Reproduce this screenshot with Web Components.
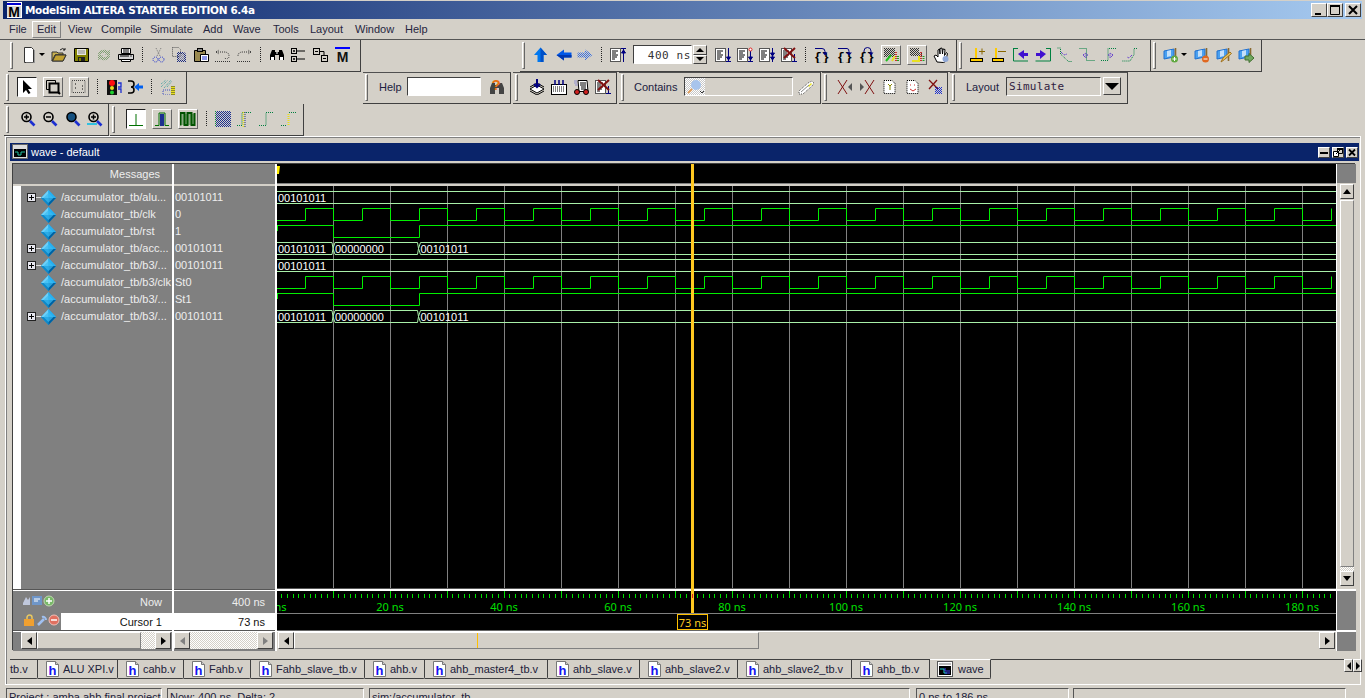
<!DOCTYPE html>
<html>
<head>
<meta charset="utf-8">
<title>ModelSim</title>
<style>
  html, body { margin: 0; padding: 0; background: #d4d0c8; overflow: hidden; }
  body { width: 1365px; height: 698px; font: 11px "Liberation Sans", sans-serif; color: #1a1a2a; }
  ms-app { height: 698px; }
</style>
</head>
<body>
<ms-app>
  <ms-titlebar>ModelSim ALTERA STARTER EDITION 6.4a</ms-titlebar>
  <ms-menubar></ms-menubar>

  <ms-toolbars>
    <ms-toolrow style="border-top:1px solid #555;height:33px;--pb:2px">
      <ms-toolgroup style="margin-left:8px;width:353px" pad="13">
        <ms-icon name="new" style="margin-right:2px"></ms-icon><ms-icon name="drop" w="6" style="margin-right:6px"></ms-icon>
        <ms-icon name="open" style="margin-right:7px"></ms-icon><ms-icon name="save" style="margin-right:6px"></ms-icon><ms-icon name="reload" style="margin-right:6px"></ms-icon><ms-icon name="print"></ms-icon>
        <ms-sep></ms-sep>
        <ms-icon name="cut" style="margin-right:4px"></ms-icon><ms-icon name="copy" style="margin-right:6px"></ms-icon><ms-icon name="paste" style="margin-right:6px"></ms-icon><ms-icon name="undo" style="margin-right:5px"></ms-icon><ms-icon name="redo"></ms-icon>
        <ms-sep></ms-sep>
        <ms-icon name="find" style="margin-right:6px"></ms-icon><ms-icon name="tree" style="margin-right:6px"></ms-icon><ms-icon name="tree2" style="margin-right:6px"></ms-icon><ms-icon name="logo"></ms-icon>
      </ms-toolgroup>
      <ms-toolgroup style="margin-left:159px;width:437px" pad="13">
        <ms-icon name="up" style="margin-right:7px"></ms-icon><ms-icon name="left" style="margin-right:5px"></ms-icon><ms-icon name="right"></ms-icon>
        <ms-sep></ms-sep>
        <ms-icon name="docup" style="margin-right:7px"></ms-icon>
        <ms-run-input>400 ns</ms-run-input>
        <ms-icon name="docdown" style="margin-left:8px;margin-right:6px"></ms-icon><ms-icon name="docdot" style="margin-right:6px"></ms-icon><ms-icon name="docdown2" style="margin-right:6px"></ms-icon><ms-icon name="docx"></ms-icon>
        <ms-sep></ms-sep>
        <ms-icon name="step1" w="17" style="margin-right:6px"></ms-icon><ms-icon name="step2" w="17" style="margin-right:5px"></ms-icon><ms-icon name="step3" w="17" style="margin-right:5px"></ms-icon>
        <ms-btn><ms-icon name="perf1"></ms-icon></ms-btn><ms-btn style="margin-left:6px"><ms-icon name="perf2"></ms-icon></ms-btn><ms-icon name="hand" style="margin-left:6px"></ms-icon>
      </ms-toolgroup>
      <ms-toolgroup style="width:194px" pad="12">
        <ms-icon name="curadd" style="margin-right:6px"></ms-icon><ms-icon name="curdel" style="margin-right:6px"></ms-icon><ms-icon name="brackl" style="margin-right:6px"></ms-icon><ms-icon name="brackr" style="margin-right:6px"></ms-icon><ms-icon name="dot1" style="margin-right:6px"></ms-icon><ms-icon name="dot2" style="margin-right:6px"></ms-icon><ms-icon name="dot3" style="margin-right:5px"></ms-icon><ms-icon name="dot4"></ms-icon>
      </ms-toolgroup>
      <ms-toolgroup style="width:111px" pad="12">
        <ms-icon name="flagadd" w="16"></ms-icon><ms-icon name="drop" w="6" style="margin:0 7px 0 2px"></ms-icon><ms-icon name="flagdel" style="margin-right:6px"></ms-icon><ms-icon name="flagedit" style="margin-right:6px"></ms-icon><ms-icon name="flaggo"></ms-icon>
      </ms-toolgroup>
    </ms-toolrow>

    <ms-toolrow style="--pb:3px;--hm:1px">
      <ms-toolgroup style="margin-left:4px;width:183px;--pb:2px;--hm:2px" pad="13">
        <ms-btn pressed><ms-icon name="arrow"></ms-icon></ms-btn><ms-btn style="margin-left:6px"><ms-icon name="zoombox"></ms-icon></ms-btn><ms-btn style="margin-left:6px"><ms-icon name="dotbox"></ms-icon></ms-btn>
        <ms-sep></ms-sep>
        <ms-icon name="stop" style="margin-right:5px"></ms-icon><ms-icon name="merge"></ms-icon>
        <ms-sep></ms-sep>
        <ms-icon name="hatch"></ms-icon>
      </ms-toolgroup>
      <ms-toolgroup top style="margin-left:176px;width:148px" pad="16">
        <span style="margin-right:5px">Help</span><ms-field width="74"></ms-field><ms-icon name="helpfind" style="margin-left:8px"></ms-icon>
      </ms-toolgroup>
      <ms-toolgroup top style="margin-left:2px;width:104px" pad="16">
        <ms-icon name="load" style="margin-right:6px"></ms-icon><ms-icon name="grid" style="margin-right:6px"></ms-icon><ms-icon name="cart" style="margin-right:6px"></ms-icon><ms-icon name="docx"></ms-icon>
      </ms-toolgroup>
      <ms-toolgroup top style="margin-left:2px;width:202px" pad="15">
        <span style="margin-right:7px">Contains</span><ms-contains></ms-contains><ms-icon name="pencil" style="margin-left:5px"></ms-icon>
      </ms-toolgroup>
      <ms-toolgroup top style="margin-left:1px;width:126px" pad="15">
        <ms-icon name="xl" style="margin-right:6px"></ms-icon><ms-icon name="xr" style="margin-right:7px"></ms-icon><ms-icon name="pg1" style="margin-right:7px"></ms-icon><ms-icon name="pg2" style="margin-right:6px"></ms-icon><ms-icon name="xdither"></ms-icon>
      </ms-toolgroup>
      <ms-toolgroup top style="margin-left:2px;width:178px" pad="16">
        <span style="margin-right:7px">Layout</span><ms-select>Simulate</ms-select>
      </ms-toolgroup>
    </ms-toolrow>

    <ms-toolrow style="--pb:1px">
      <ms-toolgroup style="margin-left:4px;width:105px" pad="16">
        <ms-icon name="zoomin" style="margin-right:6px"></ms-icon><ms-icon name="zoomout" style="margin-right:7px"></ms-icon><ms-icon name="zoomfull" style="margin-right:6px"></ms-icon><ms-icon name="zoomcur"></ms-icon>
      </ms-toolgroup>
      <ms-toolgroup style="margin-left:1px;width:194px" pad="16">
        <ms-btn pressed><ms-icon name="w1"></ms-icon></ms-btn><ms-btn style="margin-left:6px"><ms-icon name="w2"></ms-icon></ms-btn><ms-btn style="margin-left:6px"><ms-icon name="w3"></ms-icon></ms-btn>
        <ms-sep></ms-sep>
        <ms-icon name="checker" style="margin-right:6px"></ms-icon><ms-icon name="edge1" style="margin-right:6px"></ms-icon><ms-icon name="edge2" style="margin-right:6px"></ms-icon><ms-icon name="edge3"></ms-icon>
      </ms-toolgroup>
    </ms-toolrow>
  </ms-toolbars>

  <ms-frame>
    <ms-wave-window title="wave - default">
      <ms-signal expand name="/accumulator_tb/alu..." value="00101011"></ms-signal>
      <ms-signal name="/accumulator_tb/clk" value="0"></ms-signal>
      <ms-signal name="/accumulator_tb/rst" value="1"></ms-signal>
      <ms-signal expand name="/accumulator_tb/acc..." value="00101011"></ms-signal>
      <ms-signal expand name="/accumulator_tb/b3/..." value="00101011"></ms-signal>
      <ms-signal name="/accumulator_tb/b3/clk" value="St0"></ms-signal>
      <ms-signal name="/accumulator_tb/b3/..." value="St1"></ms-signal>
      <ms-signal expand name="/accumulator_tb/b3/..." value="00101011"></ms-signal>
    </ms-wave-window>
    <ms-tabs>
      <ms-tab w="28" plain>tb.v</ms-tab>
      <ms-tab w="80">ALU XPI.v</ms-tab>
      <ms-tab w="66">cahb.v</ms-tab>
      <ms-tab w="67">Fahb.v</ms-tab>
      <ms-tab w="114">Fahb_slave_tb.v</ms-tab>
      <ms-tab w="60">ahb.v</ms-tab>
      <ms-tab w="123">ahb_master4_tb.v</ms-tab>
      <ms-tab w="92">ahb_slave.v</ms-tab>
      <ms-tab w="98">ahb_slave2.v</ms-tab>
      <ms-tab w="114">ahb_slave2_tb.v</ms-tab>
      <ms-tab w="78">ahb_tb.v</ms-tab>
      <ms-tab w="61" active>wave</ms-tab>
    </ms-tabs>
  </ms-frame>

  <ms-statusbar>
    <ms-status w="156">Project : amba ahb final project</ms-status>
    <ms-status w="197" style="margin-left:5px">Now: 400 ns&nbsp; Delta: 2</ms-status>
    <ms-status w="541" style="margin-left:5px">sim:/accumulator_tb</ms-status>
    <ms-status w="153" style="margin-left:6px">0 ps to 186 ns</ms-status>
    <ms-status w="273" style="margin-left:4px"></ms-status>
  </ms-statusbar>
</ms-app>

<script>
const UI_FONT = '"Liberation Sans", Arial, sans-serif';
const MONO_FONT = '"DejaVu Sans Mono", "Liberation Mono", monospace';

// dither fill, every icon has its own shadow root so the id can repeat
const dith = (c, id = 'd') => `<pattern id="${id}" width="2" height="2" patternUnits="userSpaceOnUse"><rect width="1" height="1" fill="${c}"/><rect x="1" y="1" width="1" height="1" fill="${c}"/></pattern>`;
const dots = 'stroke-dasharray="1 1"';
const NAVY = '#000080';

const docLines = `<rect x=".5" y="1.5" width="10" height="13" fill="#fff" stroke="#555"/><path d="M2 4h6M2 6h4M2 8h6M2 10h5M2 12h3" stroke="#000"/>`;
const lens = (extra = '', fill = 'none') => `<circle cx="6.5" cy="6" r="4.5" fill="${fill}" stroke="#000" stroke-width="1.6"/>${extra}<path d="M10 10l4.5 4.5" stroke="#1c2fd0" stroke-width="2.6"/>`;
const flag = (extra) => `<path d="M1 4l10-2v8l-10 2z" fill="#4aa0f0" stroke="#2070d0"/><path d="M4 4l4-1v6l-4 1z" fill="#c4e0fa"/><path d="M12.5 1v13" stroke="#8a6a30" stroke-width="1.6"/>${extra}`;
const stepIcon = (arc) => `<text x="0" y="14" font-family="Liberation Mono" font-weight="700" font-size="13" fill="#000">{}</text>${arc}`;

const ICONS = {
  new: `<path d="M3.500 .5h7l2 2v13h-9z" fill="#fff" stroke="#333"/><path d="M13.500 3v13H5" stroke="#999" fill="none"/>`,
  drop: `<path d="M0 6h6L3 9z" fill="#000"/>`,
  open: `<path d="M1 14V5h5l1 1h5v2H4l-3 6h11l3-6H4" fill="#c8b050" stroke="#333"/><path d="M1.500 14l3-6h10.500l-3 6z" fill="#c0a030" stroke="#333"/><path d="M9 3q3-3 5 0M14 1v2h-2" fill="none" stroke="#222"/>`,
  save: `<path d="M.5 1.500h14v13H.5z" fill="#808000" stroke="#000"/><rect x="3" y="2" width="9" height="6" fill="#e8e8e0"/><path d="M4 4h7M4 6h7" stroke="#888"/><rect x="4" y="10" width="7" height="4" fill="#222"/><rect x="5" y="11" width="2" height="3" fill="#808000"/>`,
  reload: `${dith('#7f9f70')}<path d="M2 7a6 5 0 0 1 10-3l2-1v5h-5l1.500-1.500A4 3 0 0 0 4 8zM14 9a6 5 0 0 1-10 3l-2 1V8h5L5.500 9.500A4 3 0 0 0 12 8z" fill="url(#d)"/>`,
  print: `<path d="M3.500 1.500h9v5h-9z" fill="#fff" stroke="#000"/><path d="M.5 7.500h15v5h-15z" fill="#d8d8d8" stroke="#000"/><path d="M3.500 12.500h9v2h-9z" fill="#fff" stroke="#000"/><path d="M5 3h6M5 5h6M2 9h9" stroke="#000"/><path d="M12 9h2" stroke="#444"/>`,
  cut: `<path d="M5 1l4 8M10 1L6 9" stroke="#777" ${dots} fill="none"/><circle cx="4.500" cy="12.500" r="2.500" fill="none" stroke="#1c2fd0" ${dots}/><circle cx="10.500" cy="12.500" r="2.500" fill="none" stroke="#1c2fd0" ${dots}/>`,
  copy: `${dith('#1a2a80')}<path d="M1.500 .5h6l2 2v7h-8z" fill="none" stroke="#555" ${dots}/><path d="M6 5h7l2 2v8H6z" fill="url(#d)"/><path d="M8 8h5M8 10h5M8 12h5" stroke="#d4d0c8"/>`,
  paste: `<path d="M1.500 3.500h11v11h-11z" fill="#9a8a50" stroke="#000"/><rect x="4.500" y="1.500" width="5" height="3" fill="#888" stroke="#000"/><path d="M7.500 7.500h8v7h-8z" fill="#fff" stroke="#000"/><path d="M9 10h5M9 12h5" stroke="#1c2fd0"/>`,
  undo: `<path d="M1 5l3 2M1 5l3-2M1 5h8q5 0 5 4t-5 2" fill="none" stroke="#333" ${dots}/><path d="M0 14.500h15" stroke="#333" ${dots}/>`,
  redo: `<path d="M15 5l-3 2M15 5l-3-2M15 5H7q-5 0-5 4" fill="none" stroke="#333" ${dots}/><path d="M1 14.500h14" stroke="#333" ${dots}/>`,
  find: `<path d="M1 13V8l2-5h3v2h4V3h3l2 5v5h-5V8H6v5z" fill="#000"/><rect x="2" y="10" width="3" height="3" fill="#fff"/><rect x="11" y="10" width="3" height="3" fill="#fff"/><rect x="7" y="5" width="2" height="2" fill="#888"/>`,
  tree: `<rect x=".5" y="1.500" width="5" height="5" fill="none" stroke="#000"/><rect x=".5" y="9.500" width="5" height="5" fill="none" stroke="#000"/><path d="M2 4h2M3 3v2M2 12h2M3 11v2M6 4h8M6 12h8" stroke="#000"/>`,
  tree2: `<rect x=".5" y="1.500" width="6" height="6" fill="none" stroke="#000"/><rect x="8.500" y="8.500" width="6" height="6" fill="none" stroke="#000"/><path d="M2 4.500h3M10 11.500h3M7 4.500h4v4" stroke="#000" fill="none"/>`,
  logo: `<rect x="0" y="0" width="15" height="2" fill="#0000ff"/><text x="7.500" y="15" text-anchor="middle" font-family="Liberation Sans" font-weight="700" font-size="14" fill="#111">M</text>`,
  up: `<path d="M7.500 .5l6.500 7.500h-3.500v7h-6v-7H1z" fill="#0078f0"/><path d="M7.500 .5l6.500 7.500h-3.500v7h-3z" fill="#0050c8"/>`,
  left: `<path d="M.5 8L8 2.500V5.500h7.500v5H8v3z" fill="#0058e8"/><path d="M.5 8H15.500v2.500H8v3z" fill="#0038b0"/>`,
  right: `${dith('#3a70e0')}<path d="M15.500 8L8 2.500V5.500H.5v5H8v3z" fill="url(#d)"/>`,
  docup: `${docLines}<path d="M13.500 15V1M11 1.500h5M11.500 6h4l-2-3z" stroke="${NAVY}" fill="${NAVY}"/>`,
  docdown: `${docLines}<path d="M13.500 1v13M11 14.500h5M11.500 10h4l-2 3z" stroke="${NAVY}" fill="${NAVY}"/>`,
  docdot: `${docLines}<path d="M13.500 4v10M11 14.500h5M11.500 10h4l-2 3z" stroke="${NAVY}" fill="${NAVY}"/><circle cx="13.500" cy="2.500" r="1.500" fill="#fff" stroke="#e02020"/>`,
  docdown2: `${docLines}<path d="M13.500 1v14M11.500 6h4l-2 3zM11.500 10h4l-2 3z" stroke="${NAVY}" fill="${NAVY}"/>`,
  docx: `${docLines}<path d="M13.500 7v7M11 14.500h5" stroke="${NAVY}"/><path d="M3 1l11 10M14 1L3 11" stroke="#801010" stroke-width="2"/>`,
  step1: stepIcon(`<path d="M1 1.500h7a3 3 0 0 1 3 3V6" fill="none" stroke="${NAVY}"/><path d="M8.500 5.500h5l-2.500 3z" fill="${NAVY}"/>`),
  step2: stepIcon(`<path d="M1 1.500h9q2 0 2 3V6" fill="none" stroke="${NAVY}"/><path d="M9 5.500h6l-3 3z" fill="${NAVY}"/>`),
  step3: stepIcon(`<path d="M5 5V4a3 3 0 0 1 7 0v2" fill="none" stroke="${NAVY}"/><path d="M9.500 5.500h5l-2.500 3z" fill="${NAVY}"/>`),
  perf1: `${dith('#333')}<rect x="1" y="1" width="11" height="9" fill="url(#d)"/><path d="M3 14l5-6" stroke="#20c020" stroke-width="2"/><path d="M9 14l3-5" stroke="#e8e020" stroke-width="2"/><path d="M13 5v10" stroke="#d03030" stroke-width="2" ${dots}/><path d="M15 9v6" stroke="#20a020" stroke-width="2" ${dots}/>`,
  perf2: `${dith('#333')}<path d="M1 1h9v5h3v3H1z" fill="url(#d)"/><path d="M3 14h7V9" fill="none" stroke="#e8e020" stroke-width="2"/><path d="M12 5v10" stroke="#d03030" stroke-width="2" ${dots}/><path d="M14.500 9v6" stroke="#20a020" stroke-width="2" ${dots}/>`,
  hand: `<path d="M4 15L1 9l2-1 2 2V3l1.500-1L7 7V1.500L9 1l.5 6 .5-5 2 .5-.5 6 2-3 1 1-2 8-2 1z" fill="#fff" stroke="#000"/><circle cx="12.500" cy="12" r="3" fill="#8fa8d8"/>`,
  curadd: `<path d="M7 1v10" stroke="#ffcc00" stroke-width="2"/><rect x="1.500" y="11.500" width="12" height="3" fill="#ffcc00" stroke="#000"/><path d="M10 4.500h6M13 1.500v6" stroke="#886600"/>`,
  curdel: `<path d="M5 1v10" stroke="#ffcc00" stroke-width="2"/><rect x="1.500" y="11.500" width="11" height="3" fill="#ffcc00" stroke="#000"/><path d="M7 4.500h8" stroke="#886600"/>`,
  brackl: `<path d="M.5 1v13H15M.5 1.500H5" fill="none" stroke="#008040"/><path d="M5 7l6-4v3h4v3h-4v3z" fill="#4010d0"/>`,
  brackr: `<path d="M15.500 1v13H.5M15.500 1.500H11" fill="none" stroke="#008040"/><path d="M11 7L5 3v3H1v3h4v3z" fill="#4010d0"/>`,
  dot1: `<path d="M.5 1h3v6l8 7.500h4" fill="none" stroke="#008040" ${dots}/><path d="M4 5l3 3 3-1" fill="none" stroke="#4010d0" ${dots}/>`,
  dot2: `<path d="M.5 1.500h7v12h8" fill="none" stroke="#008040" ${dots}/><path d="M4 8l3-2v5zM8 8h2" fill="none" stroke="#4010d0" ${dots}/>`,
  dot3: `<path d="M15 1.500H7v12H0" fill="none" stroke="#008040" ${dots}/><path d="M12 8l-3-2v5zM8 8H6" fill="none" stroke="#4010d0" ${dots}/>`,
  dot4: `<path d="M15 1.500h-3v6l-4 6.500H0" fill="none" stroke="#008040" ${dots}/><path d="M10 8l-3 3-2-1" fill="none" stroke="#4010d0" ${dots}/>`,
  flagadd: flag(`<circle cx="11.500" cy="12" r="3.500" fill="#60a840"/><path d="M9.500 12h4M11.500 10v4" stroke="#fff"/>`),
  flagdel: flag(`<circle cx="11.500" cy="12" r="3.500" fill="#e06820"/><path d="M9.500 12h4" stroke="#fff"/>`),
  flagedit: flag(`<path d="M5 15l2-4 7-6 1.500 1.500-7 6z" fill="#e8c860" stroke="#a07020"/>`),
  flaggo: flag(`<path d="M7 9h4V6.500l5 4.500-5 4.500V13H7z" fill="#70a860" stroke="#407030"/>`),
  arrow: `<path d="M4 1v13l3-3 2.500 4 2-1-2.500-4h4z" fill="#000"/>`,
  zoombox: `<path d="M1.500 1.500h9v9h-9z" fill="none" stroke="#000"/><path d="M4.500 4.500h9v9h-9z" fill="#d4d0c8" stroke="#000" stroke-width="2"/><path d="M13 13l2 2" stroke="#000" stroke-width="2"/>`,
  dotbox: `<path d="M1 1.500h13v12H1z" fill="none" stroke="#444" ${dots}/><path d="M4 5h1M4 9h1M11 7h1M11 10h1" stroke="#000"/>`,
  stop: `<rect x="1" y="1" width="10" height="15" fill="#111"/><circle cx="6" cy="4" r="3" fill="#ff1010"/><circle cx="6" cy="9" r="2" fill="#e8e020"/><circle cx="6" cy="13.500" r="2" fill="#20d030"/><path d="M12 4h3v4h-3M12 10h3v4" fill="none" stroke="#1c2fd0" stroke-width="1.300"/>`,
  merge: `<path d="M1 2h3q3 0 3 3t-3 3q3 0 3 3t-3 3H1" fill="none" stroke="#000" stroke-width="1.500"/><path d="M7 8l5-4v2.500h4v3h-4V12z" fill="#0060f0"/>`,
  hatch: `<path d="M1 8l7-7M4 9l7-8M7 8l5-6M1 5l5-4" stroke="#40a0a0" ${dots}/><path d="M3 11h9v5H3z" fill="none" stroke="#4050c0" ${dots}/><rect x="11" y="7" width="4" height="9" fill="#e8e020"/><path d="M12 7v9M14 7v9" stroke="#333" ${dots}/>`,
  helpfind: `<path d="M1 15V9l2-5h3v2h4V4h3l2 5v6h-5V9H6v6z" fill="#444"/><text x="7" y="11" text-anchor="middle" font-family="Liberation Sans" font-weight="700" font-size="15" fill="#e87010">?</text>`,
  load: `<path d="M1 10l7-4 7 4-7 4z" fill="#fff" stroke="#000"/><path d="M1 12l7 4 7-4M1 8l7-4 7 4" fill="none" stroke="#000"/><path d="M8 0v7M5 5l3 3 3-3" fill="none" stroke="${NAVY}" stroke-width="2"/>`,
  grid: `<rect x=".5" y="5.500" width="15" height="10" fill="#fff" stroke="#000"/><path d="M2 8h12M2 10h12M2 12h12" stroke="#000" ${dots}/><path d="M4 1v5M8 1v5M12 1v5" stroke="${NAVY}" stroke-width="1.500"/>`,
  cart: `<path d="M5 1.500h9l1 11H6z" fill="#fff" stroke="#000"/><path d="M7 4h6M7 6h6M8 8h5M8 10h5" stroke="#000"/><path d="M1 2h3M1 4h3M2 6h3" stroke="#9090d0"/><circle cx="4" cy="13" r="2.500" fill="#d02020" stroke="#000"/><circle cx="13" cy="13" r="2.500" fill="#d02020" stroke="#000"/>`,
  pencil: `<path d="M1 12l9-8 4-2 2 2-2 3-9 8H1z" fill="#fff" stroke="#555" ${dots}/><path d="M10 7l3-3 1 1-3 3z" fill="#e8e020"/><path d="M3 13l8-7" stroke="#888"/>`,
  xl: `<path d="M1 1l9 14M10 1L1 15" stroke="#801010"/><path d="M11 8l4-4v8z" fill="#555"/>`,
  xr: `<path d="M6 1l9 14M15 1L6 15" stroke="#801010"/><path d="M5 8L1 4v8z" fill="#555"/>`,
  pg1: `<path d="M2 1.500h8l3 3v10H2z" fill="#fff" stroke="#000" ${dots}/><path d="M6 5l2 2 2-2M8 7v4" stroke="#888800" fill="none"/>`,
  pg2: `<path d="M2 1.500h8l3 3v10H2z" fill="#fff" stroke="#000" ${dots}/><path d="M5 6h1M9 6h1M5 10l3 2 3-2" stroke="#d03030" fill="none"/>`,
  xdither: `${dith('#1c2fd0')}<path d="M2 1l9 9M10 1L2 10" stroke="#801010" stroke-width="1.300"/><rect x="8" y="8" width="7" height="7" fill="url(#d)"/>`,
  zoomin: lens(`<path d="M4 6h5M6.500 3.500v5" stroke="#000" stroke-width="1.500"/>`),
  zoomout: lens(`<path d="M4 6h5" stroke="#000" stroke-width="1.500"/>`),
  zoomfull: lens('', '#15507f'),
  zoomcur: lens(`<path d="M4 6h5M6.500 3.500v5" stroke="#000" stroke-width="1.500"/><path d="M0 13h10" stroke="#30c0e0" stroke-width="2"/>`),
  w1: `<path d="M1 14.500h14M8 3v11" stroke="#007000" fill="none"/>`,
  w2: `<path d="M1 14.500h4V2h6v12.500h4" stroke="#007000" fill="none"/><rect x="6" y="3" width="4" height="12" fill="#1c2f90"/>`,
  w3: `<path d="M.5 14.500V2h4v12h3V2h4v12h3V2" stroke="#005000" stroke-width="2" fill="none"/><rect x="1" y="3" width="14" height="11" fill="#006000" opacity=".35"/>`,
  checker: `${dith('#1c2f90')}${dith('#109040', 'e')}<rect width="16" height="16" fill="url(#e)"/><rect x="1" y="0" width="15" height="16" fill="url(#d)"/>`,
  edge1: `<path d="M0 14.500h5V1.500h9" fill="none" stroke="#008040" ${dots}/><path d="M6.500 1v15" stroke="#e8e020" stroke-width="2" ${dots}/><path d="M8 1v15" stroke="#1c2f90" ${dots}/>`,
  edge2: `<path d="M0 14.500h7V1.500h8" fill="none" stroke="#008040" ${dots}/>`,
  edge3: `<path d="M0 14.500h6" fill="none" stroke="#008040" ${dots}/><path d="M7.500 14V2" stroke="#e8e020" stroke-width="2" ${dots}/><path d="M8 1.500h7" stroke="#008040" ${dots}/>`,
  signal: `<path d="M7.500 0l7.500 8-7.500 8L0 8z" fill="#18a0e0"/><path d="M7.500 0v8H0z" fill="#70d0f8"/><path d="M7.500 0L15 8H7.500z" fill="#28b0f0"/><path d="M0 8h7.500v8z" fill="#1088c8"/><path d="M15 8H7.500v8z" fill="#0060a0"/><path d="M7.500 3l5 5-5 5-5-5z" fill="#38bcf4" opacity=".7"/>`,
  tabdoc: `<path d="M.5 .5h9l3 3v12H.5z" fill="#fff" stroke="#777"/><path d="M9.500 .5v3h3" fill="#ccc" stroke="#777"/><text x="6.500" y="14" text-anchor="middle" font-family="Liberation Sans" font-weight="700" font-size="13" fill="#1414f0">h</text>`,
  wavedoc: `<rect x=".5" y=".5" width="15" height="15" fill="#fff" stroke="#555"/><rect x="2" y="2" width="12" height="2" fill="#bbb"/><rect x="2" y="5" width="12" height="9" fill="#000"/><path d="M3 8h4v4h3" fill="none" stroke="#20d0d0"/><path d="M8 7v3h5M8 12h5" stroke="#4040f0"/>`,
  appM: `<rect x="1" y="0" width="15" height="16" fill="#fff"/><rect x="1" y="1" width="14" height="2" fill="#0000d0"/><rect x="1" y="4" width="14" height="11" fill="#d8d8d8"/><text x="8" y="15" text-anchor="middle" font-family="Liberation Sans" font-weight="700" font-size="14" fill="#000">M</text>`,
  waveApp: `<rect x=".5" y=".5" width="15" height="14" fill="#ddd" stroke="#666"/><rect x="2" y="5" width="12" height="8" fill="#000"/><path d="M3 8h3v3h3V8h4" fill="none" stroke="#20c0a0"/>`,
  min: `<rect x="3" y="9" width="6" height="2" fill="#000"/>`,
  wmin: `<rect x="1" y="4" width="8" height="2" fill="#000"/>`,
  max: `<path d="M2.500 1.500h9v9h-9z" fill="none" stroke="#000"/><rect x="2" y="1" width="10" height="2" fill="#000"/>`,
  close: `<path d="M3 2l8 8M11 2l-8 8" stroke="#000" stroke-width="2"/>`,
  wclose: `<path d="M2 1.500l6 6M8 1.500l-6 6" stroke="#000" stroke-width="1.800"/>`,
  winfloat: `<path d="M4.500 .5h5v5h-5z" fill="none" stroke="#000"/><rect x="4" y="0" width="6" height="2"/><path d="M.5 3.500h5v5h-5z" fill="#fff" stroke="#000"/><path d="M3 6l4-4" stroke="#000"/>`,
  nowicons: `${dith('#8fa0c0')}<path d="M2 9l3-6 2 3 2-3v8H2z" fill="#c0c8dc"/><rect x="11" y="2" width="10" height="9" fill="#6f96c8"/><path d="M13 5h6M13 7h4" stroke="#fff"/><circle cx="28" cy="7" r="5" fill="#78b868" stroke="#c0d8b0"/><path d="M25 7h6M28 4v6" stroke="#fff" stroke-width="1.500"/>`,
  cursoricons: `<path d="M6 5V3.500a2.500 2.500 0 0 1 5 0V5" fill="none" stroke="#e8c860" stroke-width="1.500"/><rect x="3" y="5" width="10" height="7" fill="#f0a030"/><path d="M17 11l6-6" stroke="#a0c0f0" stroke-width="2.500"/><path d="M21 3a3 3 0 0 1 4 3" fill="none" stroke="#a0c0f0" stroke-width="2"/><circle cx="33" cy="6" r="5" fill="#e07060" stroke="#f0c0b8"/><path d="M30 6h6" stroke="#fff" stroke-width="1.500"/>`
};

class MsElement extends HTMLElement {
  constructor() {
    super();
    this.attachShadow({ mode: 'open' });
  }
}

class MsApp extends MsElement {
  constructor() {
    super();
    this.shadowRoot.innerHTML = `<style>:host{display:flex;flex-direction:column;width:1365px;overflow:hidden}::slotted(*){flex:none}</style><slot></slot>`;
  }
}

class MsIcon extends MsElement {
  connectedCallback() {
    const name = this.getAttribute('name');
    const w = +(this.getAttribute('w') || 16);
    const h = +(this.getAttribute('h') || 16);
    this.shadowRoot.innerHTML = `<style>:host{display:inline-block;width:${w}px;height:${h}px;flex:none;line-height:0}svg{display:block;overflow:hidden}</style>
      <svg width="${w}" height="${h}" viewBox="0 0 ${w} ${h}">${ICONS[name] || ''}</svg>`;
  }
}

class MsTitlebar extends MsElement {
  constructor() {
    super();
    this.shadowRoot.innerHTML = `<style>
      :host{display:flex;align-items:center;height:18px;margin:1px 3px 0;padding-left:3px;background:linear-gradient(90deg,#0a246a,#a6caf0);color:#fff;font:700 11px "DejaVu Sans",sans-serif}
      .t{margin-left:3px;flex:1;white-space:nowrap;font-size:10.5px;letter-spacing:-.36px}
      .b{width:16px;height:14px;box-sizing:border-box;background:#d4d0c8;border:1px solid;border-color:#fff #404040 #404040 #fff}
      .b.x{margin-left:2px;margin-right:1px}
      </style>
      <ms-icon name="appM"></ms-icon><span class="t"><slot></slot></span>
      <span class="b"><ms-icon name="min" w="14" h="12"></ms-icon></span><span class="b"><ms-icon name="max" w="14" h="12"></ms-icon></span><span class="b x"><ms-icon name="close" w="14" h="12"></ms-icon></span>`;
  }
}

class MsMenubar extends MsElement {
  constructor() {
    super();
    // [label, width up to the next item]
    const items = [['File', 23], ['Edit', 29], ['View', 33], ['Compile', 49], ['Simulate', 53], ['Add', 30], ['Wave', 40], ['Tools', 37], ['Layout', 45], ['Window', 50], ['Help', 30]];
    this.shadowRoot.innerHTML = `<style>
      :host{display:flex;align-items:center;height:20px;padding-left:9px;font:11px ${UI_FONT};color:#262640}
      span{flex:none;height:17px;line-height:17px;box-sizing:border-box}
      .on{border:1px solid;border-color:#fff #808080 #808080 #fff;line-height:15px;padding-left:4px;margin-right:7px}
      </style>` + items.map(([m, w]) => `<span class="${m === 'Edit' ? 'on' : ''}" style="width:${w}px">${m}</span>`).join('');
  }
}

class MsToolbars extends MsElement {
  constructor() {
    super();
    this.shadowRoot.innerHTML = `<style>:host{display:block;height:97px}</style><slot></slot>`;
  }
}

class MsToolrow extends MsElement {
  constructor() {
    super();
    this.shadowRoot.innerHTML = `<style>:host{display:flex;height:32px;box-sizing:border-box}</style><slot></slot>`;
  }
}

class MsToolgroup extends MsElement {
  connectedCallback() {
    const pad = this.getAttribute('pad') || 12;
    const top = this.hasAttribute('top');
    this.shadowRoot.innerHTML = `<style>
      :host{display:flex;align-items:center;box-sizing:border-box;height:32px;flex:none;border-right:1px solid #404040;border-bottom:1px solid #404040;${top ? 'border-top:1px solid #505050;' : ''}padding-left:${pad}px;padding-bottom:var(--pb,0);font:11px ${UI_FONT};color:#202040}
      .h{flex:none;align-self:flex-start;height:25px;margin-top:var(--hm,2px);margin-left:${-pad + 2}px;margin-right:${pad - 5}px;border:1px solid;border-color:#fff #666 #666 #fff;box-sizing:content-box;width:1px}
      </style><i class="h"></i><slot></slot>`;
  }
}

class MsSep extends MsElement {
  constructor() {
    super();
    this.shadowRoot.innerHTML = `<style>:host{display:block;flex:none;width:1px;height:16px;margin:0 8px;background:repeating-linear-gradient(#222 0 1px,transparent 1px 2px)}</style>`;
  }
}

class MsBtn extends MsElement {
  constructor() {
    super();
    this.shadowRoot.innerHTML = `<style>
      :host{display:flex;align-items:center;justify-content:center;flex:none;width:20px;height:20px;box-sizing:border-box;border:1px solid;border-color:#fff #666 #666 #fff;background:#d4d0c8}
      :host([pressed]){background:#fff;border-color:#222 #fff #fff #222}
      </style><slot></slot>`;
  }
}

class MsRunInput extends MsElement {
  constructor() {
    super();
    this.shadowRoot.innerHTML = `<style>
      :host{display:flex;flex:none;height:19px;font:11px ${MONO_FONT};color:#333}
      .i{width:59px;box-sizing:border-box;height:19px;line-height:19px;background:#fff;border:1px solid;border-color:#404040 #fff #fff #404040;text-align:right;padding-right:0;letter-spacing:.6px}
      .s{width:14px;margin-left:1px;height:19px;display:flex;flex-direction:column}
      .s i{flex:1;border:1px solid;border-color:#fff #404040 #404040 #fff;display:flex;align-items:center;justify-content:center;font-size:0}
      .s i::before{content:"";border:4px solid transparent;border-top:0;border-bottom:4px solid #000}
      .s i+i::before{border-bottom:0;border-top:4px solid #000}
      </style><div class="i"><slot></slot></div><div class="s"><i></i><i></i></div>`;
  }
}

class MsField extends MsElement {
  connectedCallback() {
    const w = this.getAttribute('width') || 74;
    this.shadowRoot.innerHTML = `<style>:host{display:block;flex:none;width:${w}px;height:19px;box-sizing:border-box;background:#fff;border:1px solid;border-color:#404040 #fff #fff #404040}</style>`;
  }
}

class MsContains extends MsElement {
  constructor() {
    super();
    this.shadowRoot.innerHTML = `<style>
      :host{display:flex;flex:none;width:109px;height:19px;box-sizing:border-box;background:#d4d0c8;border:1px solid;border-color:#404040 #fff #fff #404040}
      .g{width:20px;height:17px;background:repeating-conic-gradient(#fff 0 25%,#c8c8c8 0 50%) 0 0/2px 2px;display:flex;align-items:center;justify-content:center}
      svg{display:block}
      </style><div class="g"><svg width="18" height="16"><circle cx="10" cy="6" r="5" fill="#a8c4ec"/><path d="M6 10l-4 4" stroke="#e0a060" stroke-width="2"/><path d="M14 12l2 2 2-2" fill="none" stroke="#333"/></svg></div>`;
  }
}

class MsSelect extends MsElement {
  constructor() {
    super();
    this.shadowRoot.innerHTML = `<style>
      :host{display:flex;flex:none;font:11px ${MONO_FONT};color:#302040}
      .v{width:95px;height:19px;box-sizing:border-box;line-height:18px;padding-left:2px;border:1px solid;border-color:#404040 #fff #fff #404040;letter-spacing:.3px}
      .d{width:18px;height:18px;margin-left:2px;box-sizing:border-box;border:1px solid;border-color:#fff #404040 #404040 #fff;display:flex;align-items:center;justify-content:center}
      .d::before{content:"";border:7px solid transparent;border-top:7px solid #000;border-bottom:0}
      </style><div class="v"><slot></slot></div><div class="d"></div>`;
  }
}

class MsFrame extends MsElement {
  constructor() {
    super();
    this.shadowRoot.innerHTML = `<style>:host{display:block;box-sizing:border-box;margin:0 4px 0 5px;height:549px;width:1356px;border:1px solid #fff;box-shadow:inset 1px 1px 0 #808080}</style><slot></slot>`;
  }
}

class MsSignal extends MsElement {
  connectedCallback() {
    const expand = this.hasAttribute('expand');
    this.shadowRoot.innerHTML = `<style>
      :host{display:grid;grid-template-columns:159px 2px 101px;height:17px;white-space:nowrap;color:#eee;font:11px/17px ${UI_FONT}}
      .n{display:flex;align-items:center;padding-left:14px;box-sizing:border-box;overflow:hidden}
      .p{width:9px;height:9px;box-sizing:border-box;background:#e8e8f0;border:1px solid #222;position:relative;flex:none;visibility:${expand ? 'visible' : 'hidden'}}
      .p::before{content:"";position:absolute;left:1px;top:3px;width:5px;height:1px;background:#000}
      .p::after{content:"";position:absolute;left:3px;top:1px;width:1px;height:5px;background:#000}
      .l{flex:none;width:5px;height:1px;background:${expand ? '#ddd' : 'transparent'}}
      .t{margin-left:5px}
      .v{grid-column:3;padding-left:1px}
      </style>
      <div class="n"><i class="p"></i><i class="l"></i><ms-icon name="signal" w="15"></ms-icon><span class="t">${this.getAttribute('name')}</span></div>
      <div class="v">${this.getAttribute('value')}</div>`;
  }
}

class MsScrollbar extends MsElement {
  connectedCallback() {
    const off = this.hasAttribute('off');
    const thumb = +(this.getAttribute('thumb') || 0);
    const dither = this.hasAttribute('dither');
    const mark = this.getAttribute('mark');
    this.shadowRoot.innerHTML = `<style>
      :host{display:flex;height:17px;box-sizing:border-box;background:${dither ? 'repeating-conic-gradient(#fff 0 25%,#d4d0c8 0 50%) 0 0/2px 2px' : '#d4d0c8'}}
      .b{flex:none;width:16px;height:17px;box-sizing:border-box;background:#d4d0c8;border:1px solid;border-color:#fff #404040 #404040 #fff;display:flex;align-items:center;justify-content:center}
      .b::before{content:"";border:4px solid transparent;border-left:0;border-right:5px solid ${off ? '#808080' : '#000'}}
      .b.r::before{border-right:0;border-left:5px solid ${off ? '#808080' : '#000'}}
      .th{flex:none;width:${thumb}px;box-sizing:border-box;background:#d4d0c8;border:1px solid;border-color:#fff #808080 #808080 #fff;position:relative}
      .th i{position:absolute;left:${mark}px;top:0;bottom:0;width:1px;background:#ffc000}
      .s{flex:1}
      </style><div class="b"></div>${thumb ? `<div class="th">${mark ? '<i></i>' : ''}</div>` : ''}<div class="s"></div><div class="b r"></div>`;
  }
}

class MsVScrollbar extends MsElement {
  constructor() {
    super();
    this.shadowRoot.innerHTML = `<style>
      :host{display:flex;flex-direction:column;box-sizing:border-box;padding:1px 2px 3px 3px;background:#d4d0c8}
      .b{flex:none;height:15px;box-sizing:border-box;background:#d4d0c8;border:1px solid;border-color:#fff #404040 #404040 #fff;display:flex;align-items:center;justify-content:center}
      .b::before{content:"";border:4px solid transparent;border-top:0;border-bottom:5px solid #000}
      .b.d::before{border-bottom:0;border-top:5px solid #000}
      .th{flex:none;height:367px;margin-top:1px;box-sizing:border-box;border:1px solid;border-color:#fff #808080 #808080 #fff}
      .s{flex:1;background:repeating-conic-gradient(#fff 0 25%,#d4d0c8 0 50%) 0 0/2px 2px}
      </style><div class="b"></div><div class="th"></div><div class="s"></div><div class="b d"></div>`;
  }
}

class MsMarkerCell extends MsElement {
  connectedCallback() {
    const icons = this.getAttribute('icons');
    const white = this.hasAttribute('white');
    this.shadowRoot.innerHTML = `<style>
      :host{display:flex;align-items:center;box-sizing:border-box;background:#808080;color:${white ? '#111' : '#eee'};font:11px ${UI_FONT};white-space:nowrap}
      .ic{flex:none;width:${icons ? 48 : 0}px;height:16px}
      .t{flex:1;height:100%;display:flex;align-items:center;justify-content:flex-end;padding-right:10px;${white ? 'background:#fff;' : ''}}
      </style>${icons ? `<div class="ic"><ms-icon name="${icons}" w="40" h="16" style="margin-left:8px"></ms-icon></div>` : ''}<div class="t"><slot></slot></div>`;
  }
}

class MsWave extends MsElement {
  connectedCallback() {
    const X = (ns) => 276 + ns * 5.7;
    const grey = '#808080', bus = '#a8f0a8', clk = '#00f000';
    let s = '';
    s += `<rect x="277" y="164" width="1059" height="466" fill="#000"/>`;
    // top strip and its separator
    s += `<rect x="277" y="183" width="1059" height="1" fill="#808080"/><rect x="277" y="184" width="1059" height="2" fill="#d4d0c8"/>`;
    s += `<path d="M277 166h3l-1 8h-2z" fill="#ffee00"/>`;
    for (let x = 333; x < 1336; x += 57) s += `<rect x="${x}" y="186" width="1" height="403" fill="${grey}"/>`;

    const row = (i) => 197 + 17 * i;
    const busRow = (i, segs) => {
      const c = row(i);
      let d = '', t = '';
      segs.forEach(([from, to, label], k) => {
        const x0 = X(from), x1 = Math.min(X(to), 1336);
        const a = k ? x0 + 2 : 277;
        const b = to >= 186 ? x1 : x1 - 1;
        d += `M${a} ${c - 5.5}H${b}M${a} ${c + 6.5}H${b}`;
        if (k) d += `M${x0} ${c + .5}L${a} ${c - 5.5}M${x0} ${c + .5}L${a} ${c + 6.5}M${x0} ${c + .5}L${x0 - 1} ${c - 5.5}M${x0} ${c + .5}L${x0 - 1} ${c + 6.5}`;
        t += `<text x="${k ? x0 + 2 : 278}" y="${c + 5}">${label}</text>`;
      });
      s += `<path d="${d}" fill="none" stroke="${bus}"/>` + `<g fill="#fff" font-family="Liberation Sans" font-size="11">${t}</g>`;
    };
    const clkRow = (i) => {
      const c = row(i);
      let d = `M277 ${c + 6.5}`;
      let level = 0;
      for (let ns = 5; ns < 190; ns += 5) {
        const x = Math.round(X(ns)) + .5;
        level = 1 - level;
        d += `H${x}V${level ? c - 5.5 : c + 6.5}`;
      }
      s += `<path d="${d}" fill="none" stroke="${clk}"/>`;
    };
    const rstRow = (i) => {
      const c = row(i);
      s += `<path d="M277 ${c - 5.5}H333.500V${c + 6.5}H419.500V${c - 5.500}H1336" fill="none" stroke="${clk}"/><path d="M277.500 ${c - 5.5}V${c}" stroke="${clk}"/>`;
    };
    const A = '00101011', Z = '00000000';
    busRow(0, [[0, 186, A]]);
    clkRow(1);
    rstRow(2);
    busRow(3, [[0, 10, A], [10, 25, Z], [25, 186, A]]);
    busRow(4, [[0, 186, A]]);
    clkRow(5);
    rstRow(6);
    busRow(7, [[0, 10, A], [10, 25, Z], [25, 186, A]]);

    // bottom separator, ruler and cursor band
    s += `<rect x="277" y="589" width="1059" height="2" fill="#fff"/><rect x="277" y="588" width="1059" height="1" fill="#555"/>`;
    let ticks = '';
    for (let ns = 0; ns < 186; ns++) {
      const x = Math.floor(X(ns));
      ticks += ns % 10 === 0 ? `M${x + .5} 591V598` : `M${x + .5} 594V598`;
    }
    s += `<path d="${ticks}" stroke="#00e000"/>`;
    s += `<g fill="#00e000" font-family="Noto Sans" font-size="11" text-anchor="middle">`;
    for (let ns = 0; ns <= 180; ns += 20) s += `<text x="${X(ns)}" y="611">${ns} ns</text>`;
    s += `</g>`;
    s += `<rect x="277" y="613" width="1059" height="1" fill="#808080"/>`;
    s += `<rect x="277" y="630" width="1059" height="1" fill="#666"/><rect x="277" y="631" width="1059" height="1" fill="#fff"/>`;
    s += `<rect x="691" y="164" width="3" height="449" fill="#ffc820"/>`;
    s += `<rect x="692" y="594" width="1" height="4" fill="#e02020"/>`;
    s += `<rect x="677.500" y="614.500" width="30" height="15" fill="#000" stroke="#ffc000"/>`;
    s += `<text x="692.500" y="627" text-anchor="middle" fill="#ffcc20" font-family="Noto Sans" font-size="11">73 ns</text>`;

    this.shadowRoot.innerHTML = `<style>:host{display:block;width:1059px;height:468px}svg{display:block}</style>
      <svg width="1059" height="468" viewBox="277 164 1059 468">${s}</svg>`;
  }
}

class MsWaveWindow extends MsElement {
  connectedCallback() {
    this.shadowRoot.innerHTML = `<style>
      :host{display:block;box-sizing:border-box;margin:6px 0 0 4px;width:1349px;height:512px;font:11px ${UI_FONT};color:#fff}
      .title{display:flex;align-items:center;height:18px;background:#0a246a;padding-left:2px;font:11px ${UI_FONT}}
      .title span{flex:1;margin-left:3px}
      .tb{width:12px;height:11px;background:#d4d0c8;border:1px solid;border-color:#fff #404040 #404040 #fff;box-sizing:border-box;margin-left:2px;overflow:hidden;line-height:0}
      .body{display:grid;margin:3px 3px 0 3px;grid-template-columns:159px 2px 101px 2px 1059px 1px 19px;grid-template-rows:19px 3px 403px 2px 22px 17px 2px 19px;background:#d4d0c8;box-shadow:-1px -1px 0 #404040}
      .hdr{background:#808080;display:flex;align-items:center;justify-content:flex-end;padding-right:12px;color:#eee}
      .sep{background:#fff}
      .gap{background:linear-gradient(#808080 0 1px,#d4d0c8 1px)}
      .list{grid-column:1 / 4;grid-row:3;padding-top:3px;display:flex;flex-direction:column;position:relative}
      .wave{grid-column:5;grid-row:1 / 8}
      .bgn{grid-column:1;grid-row:3;background:#808080;border-left:8px solid #fff}
      .bgv{grid-column:3;grid-row:3;background:#808080}
      .rule{background:linear-gradient(#555 0 1px,#fff 1px)}
      </style>
      <div class="title"><ms-icon name="waveApp"></ms-icon><span>${this.getAttribute('title')}</span>
        <div class="tb"><ms-icon name="wmin" w="10" h="9"></ms-icon></div><div class="tb"><ms-icon name="winfloat" w="10" h="9"></ms-icon></div><div class="tb" style="margin-right:1px"><ms-icon name="wclose" w="10" h="9"></ms-icon></div></div>
      <div class="body">
        <div class="hdr" style="grid-column:1;grid-row:1">Messages</div>
        <div class="sep" style="grid-column:2;grid-row:1 / 9"></div>
        <div class="hdr" style="grid-column:3;grid-row:1"></div>
        <div class="sep" style="grid-column:4;grid-row:1 / 9"></div>
        <div class="gap" style="grid-column:1;grid-row:2"></div>
        <div class="gap" style="grid-column:3;grid-row:2"></div>
        <div class="bgn"></div><div class="bgv"></div>
        <div class="list"><slot></slot></div>
        <div class="wave"><ms-wave></ms-wave></div>
        <div class="sep" style="grid-column:6;grid-row:1 / 9"></div>
        <div class="hdr" style="grid-column:7;grid-row:1"></div>
        <ms-vscrollbar style="grid-column:7;grid-row:2 / 4"></ms-vscrollbar>
        <div class="rule" style="grid-column:1;grid-row:4"></div>
        <div class="rule" style="grid-column:3;grid-row:4"></div>
        <div class="sep" style="grid-column:7;grid-row:4"></div>
        <ms-marker-cell icons="nowicons" style="grid-column:1;grid-row:5">Now</ms-marker-cell>
        <ms-marker-cell style="grid-column:3;grid-row:5">400 ns</ms-marker-cell>
        <ms-marker-cell icons="cursoricons" white style="grid-column:1;grid-row:6">Cursor 1</ms-marker-cell>
        <ms-marker-cell white style="grid-column:3;grid-row:6">73 ns</ms-marker-cell>
        <div class="hdr" style="grid-column:7;grid-row:5 / 7"></div>
        <div class="rule" style="grid-column:1;grid-row:7"></div>
        <div class="rule" style="grid-column:3;grid-row:7"></div>
        <div class="sep" style="grid-column:7;grid-row:7"></div>
        <div style="grid-column:1;grid-row:8;background:#808080;padding:0 1px 2px 8px"><ms-scrollbar thumb="104" dither></ms-scrollbar></div>
        <div style="grid-column:3;grid-row:8;background:#808080;padding:0 2px 2px 0"><ms-scrollbar off dither></ms-scrollbar></div>
        <div style="grid-column:5;grid-row:8;background:#d4d0c8;padding:0 1px 2px 1px"><ms-scrollbar thumb="465" mark="182"></ms-scrollbar></div>
        <div class="hdr" style="grid-column:7;grid-row:8"></div>
      </div>`;
  }
}

class MsTabs extends MsElement {
  constructor() {
    super();
    this.shadowRoot.innerHTML = `<style>
      :host{display:flex;margin:4px 0 0 4px;height:20px;position:relative;width:1350px;box-sizing:border-box;border-top:1px solid #404040}
      .a{position:absolute;right:-2px;top:-1px;display:flex}
      .a i{width:9px;height:13px;box-sizing:border-box;border:1px solid;border-color:#fff #404040 #404040 #fff;display:flex;align-items:center;justify-content:center}
      .a i::before{content:"";border:4px solid transparent;border-left:0;border-right:4px solid #000}
      .a i+i::before{border-right:0;border-left:4px solid #000}
      </style><slot></slot><div class="a"><i></i><i></i></div>`;
  }
}

class MsTab extends MsElement {
  connectedCallback() {
    const plain = this.hasAttribute('plain');
    const active = this.hasAttribute('active');
    const w = this.getAttribute('w');
    const icon = active ? '<ms-icon name="wavedoc" style="margin-right:5px"></ms-icon>' : '<ms-icon name="tabdoc" w="13" style="margin-right:4px"></ms-icon>';
    this.shadowRoot.innerHTML = `<style>
      :host{display:flex;align-items:center;flex:none;box-sizing:border-box;width:${w}px;height:19px;border-right:1px solid #404040;border-bottom:1px solid #404040;border-bottom-right-radius:2px;font:11px ${UI_FONT};color:#20203a;padding-left:${plain ? 0 : 8}px;white-space:nowrap}
      :host([active]){margin-top:-1px;height:20px;background:#d4d0c8;border-top:1px solid #fff;padding-left:7px}
      </style>${plain ? '' : icon}<span><slot></slot></span>`;
  }
}

class MsStatusbar extends MsElement {
  constructor() {
    super();
    this.shadowRoot.innerHTML = `<style>:host{display:flex;margin:3px 0 0 6px;height:14px;box-sizing:border-box;overflow:hidden}</style><slot></slot>`;
  }
}

class MsStatus extends MsElement {
  connectedCallback() {
    const w = this.getAttribute('w');
    this.shadowRoot.innerHTML = `<style>
      :host{display:block;flex:none;box-sizing:border-box;width:${w}px;height:14px;border:1px solid;border-color:#555 #fff #fff #555;padding:2px 0 0 2px;font:11px/13px ${UI_FONT};color:#20203a;white-space:nowrap;overflow:hidden}
      </style><slot></slot>`;
  }
}

const tags = {
  'ms-app': MsApp, 'ms-icon': MsIcon, 'ms-titlebar': MsTitlebar, 'ms-menubar': MsMenubar,
  'ms-toolbars': MsToolbars, 'ms-toolrow': MsToolrow, 'ms-toolgroup': MsToolgroup, 'ms-sep': MsSep,
  'ms-btn': MsBtn, 'ms-run-input': MsRunInput, 'ms-field': MsField, 'ms-contains': MsContains,
  'ms-select': MsSelect, 'ms-frame': MsFrame, 'ms-signal': MsSignal, 'ms-scrollbar': MsScrollbar,
  'ms-vscrollbar': MsVScrollbar, 'ms-marker-cell': MsMarkerCell, 'ms-wave': MsWave,
  'ms-wave-window': MsWaveWindow, 'ms-tabs': MsTabs, 'ms-tab': MsTab, 'ms-statusbar': MsStatusbar, 'ms-status': MsStatus
};
for (const [tag, cls] of Object.entries(tags)) customElements.define(tag, cls);
</script>
</body>
</html>
